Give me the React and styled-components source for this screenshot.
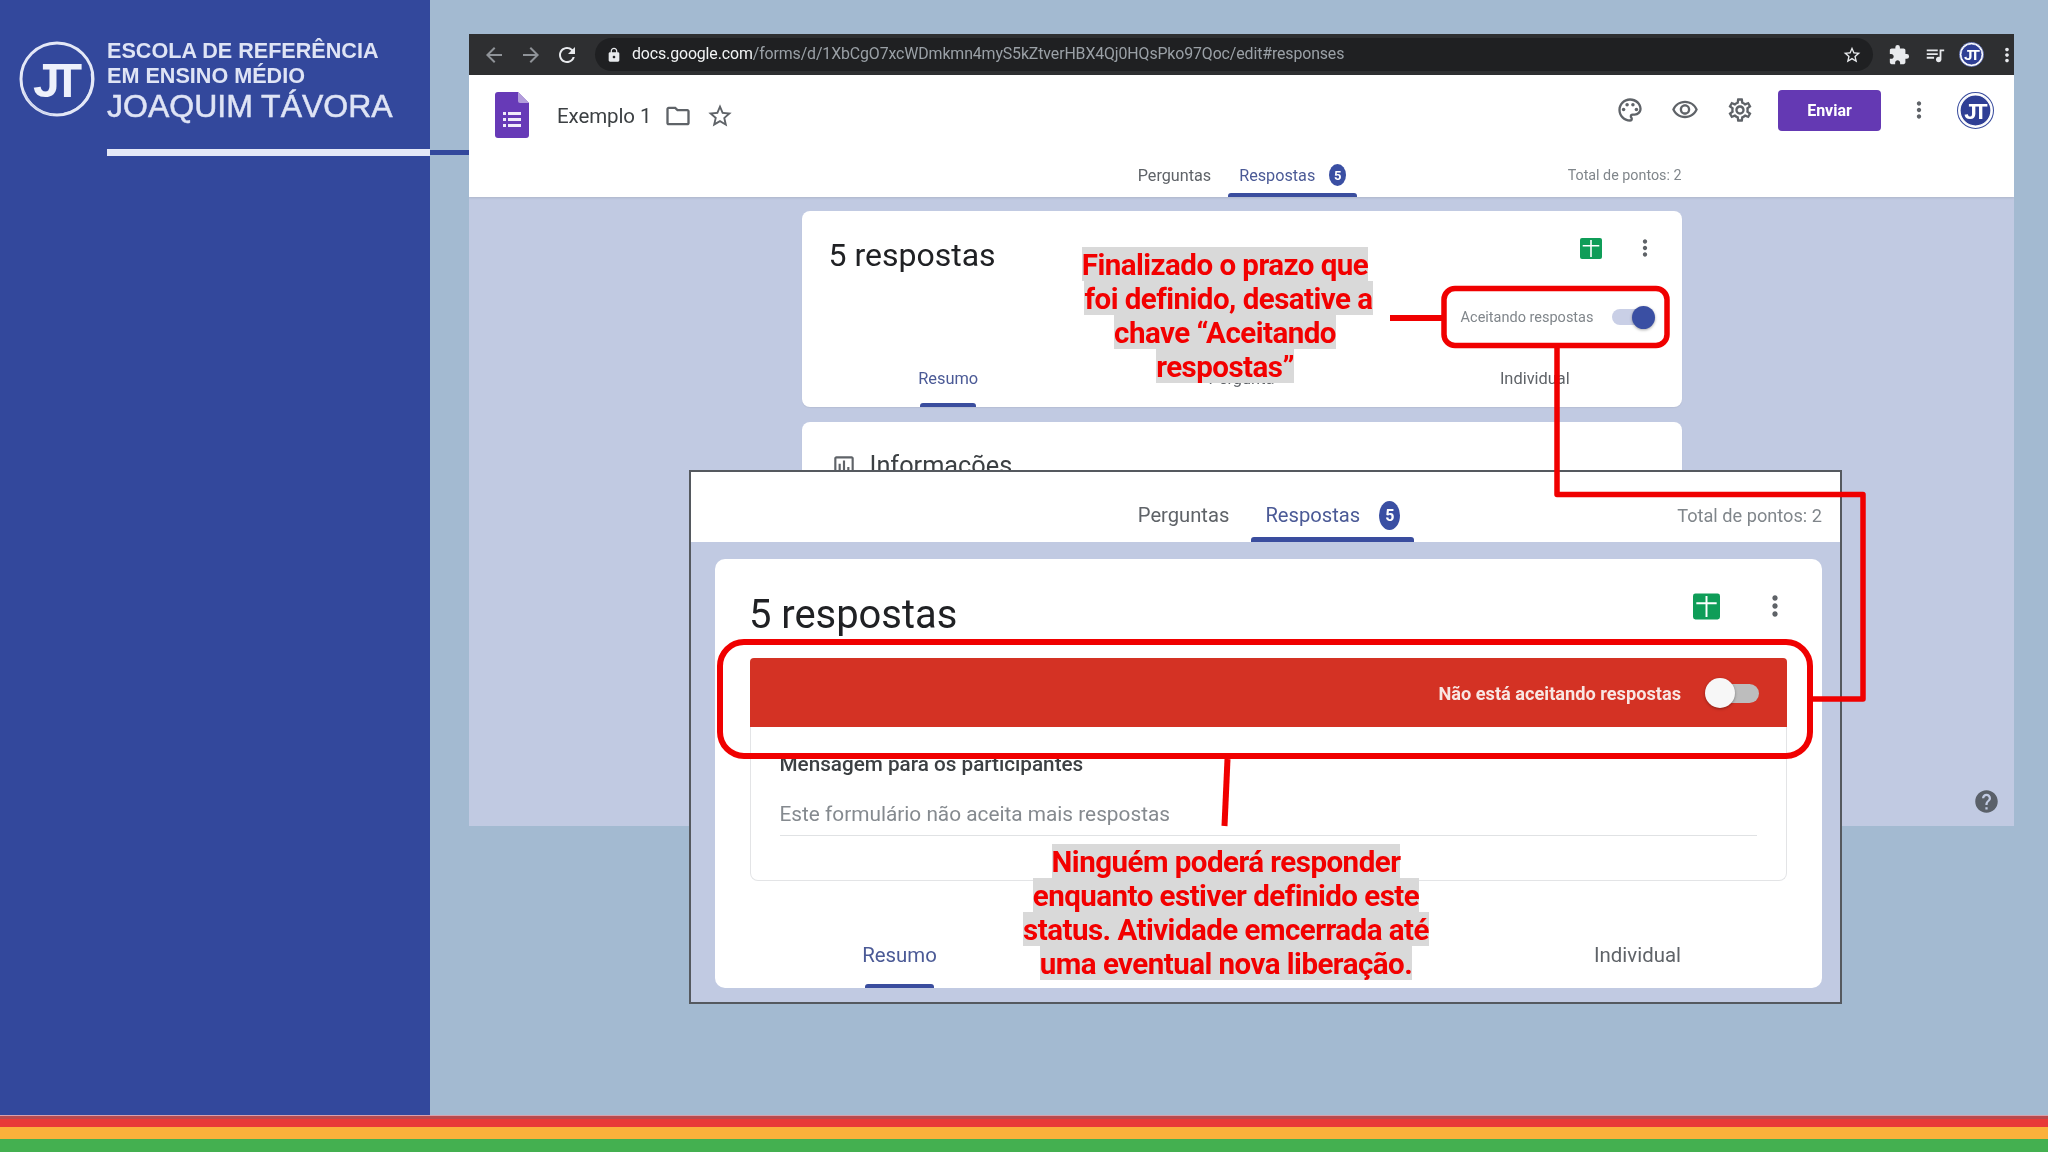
import React from 'react';
import styled, { createGlobalStyle } from 'styled-components';
import {
  MdArrowBack, MdArrowForward, MdRefresh, MdLock, MdStarBorder, MdExtension, MdQueueMusic, MdMoreVert,
  MdOutlineFolder, MdOutlinePalette, MdOutlineVisibility, MdOutlineSettings, MdHelp, MdOutlineAssessment,
} from 'react-icons/md';

const Global = createGlobalStyle`
  html, body { margin: 0; padding: 0; background: #a3bad1; }
  #root { width: 2048px; height: 1152px; overflow: hidden; }
  * { box-sizing: border-box; }
`;

const Slide = styled.div`
  position: relative; width: 2048px; height: 1152px; display: flex; flex-direction: column;
  background: #a3bad1; font-family: Roboto, "Liberation Sans", sans-serif; overflow: hidden;
  filter: blur(0.4px);
`;
const SlideBody = styled.div`flex: 1; display: flex; min-height: 0;`;
const Stripe = styled.div`height: ${p => p.$h}px; background: ${p => p.$c}; flex: none;`;

const Sidebar = styled.aside`
  position: relative; width: 430px; flex: none; background: #33489c; padding: 41px 0 0 19px;
  &::after { content: ''; position: absolute; left: 430px; top: 150px; width: 39px; height: 5px; background: #33489c; }
`;
const Brand = styled.div`display: flex; gap: 12px; align-items: flex-start; color: #dfe4f5; height: 102px;`;
const BrandText = styled.div`display: flex; flex-direction: column; margin-top: -3px; font-family: "Liberation Sans", sans-serif;`;
const BrandLine = styled.div`
  font-size: ${p => p.$big ? 32 : 21.6}px; font-weight: ${p => p.$big ? 400 : 700};
  line-height: ${p => p.$big ? 34 : 25}px; white-space: nowrap; margin-top: ${p => p.$big ? 1 : 0}px;
  -webkit-text-stroke: ${p => p.$big ? '0.5px #dfe4f5' : '0'};
`;
const SidebarRule = styled.div`height: 7px; background: #e4e8f7; margin: 6px 0 0 88px;`;

const Workspace = styled.main`flex: 1; padding: 34px 34px 0 39px; min-width: 0;`;
const Browser = styled.div`height: 792px; display: flex; flex-direction: column; background: #c1cae2; overflow: hidden;`;

const ChromeBar = styled.div`height: 41px; flex: none; display: flex; align-items: center; background: #2e2f31; padding-left: 7px; color: #e8eaed;`;
const ChromeSlot = styled.div`
  width: ${p => p.$w || 36.5}px; flex: none; display: flex; justify-content: center; align-items: center;
  color: ${p => p.$dim ? '#8f9398' : '#e8eaed'}; font-size: ${p => p.$size || 24}px;
`;
const AddressPill = styled.div`
  width: 1278px; height: 33px; margin: 0 8px 0 9.5px; flex: none; border-radius: 17px; background: #1f2022;
  display: flex; align-items: center; padding: 0 11px 0 11px; font-size: 15.9px;
`;
const LockSlot = styled.span`display: flex; font-size: 16px; color: #e8eaed; margin-right: 10px;`;
const Url = styled.div`flex: 1; color: #9aa0a6; white-space: nowrap; letter-spacing: -0.12px; margin-top: -2px;`;
const UrlHost = styled.span`color: #f1f3f4;`;

const AppHeader = styled.header`flex: none; background: #fff; height: 122px; display: flex; flex-direction: column; box-shadow: 0 1px 2px rgba(60,64,67,.15); position: relative;`;
const AppBar = styled.div`height: 75px; flex: none; display: flex; justify-content: space-between; padding: 0 20px 0 26px;`;
const AppLeft = styled.div`display: flex; align-items: center; padding-top: 7px;`;
const FormsMark = styled.span`display: flex; margin-top: -2px;`;
const DocTitle = styled.div`font-size: 20.5px; color: #3c4043; margin: 0 13px 0 28px; letter-spacing: -0.1px;`;
const GreyIcon = styled.span`display: flex; color: #5f6368; font-size: ${p => p.$size || 26}px; margin-left: ${p => p.$ml || 0}px;`;
const AppRight = styled.div`display: flex; align-items: center; padding-bottom: 5px;`;
const ActionSlot = styled.div`width: ${p => p.$w || 55}px; display: flex; justify-content: center; align-items: center; color: #5f6368; font-size: ${p => p.$size || 28}px;`;
const SendButton = styled.div`
  width: 103px; height: 41px; margin-left: 11px; border-radius: 4px; background: #6439b3; color: #fff;
  font-weight: 700; font-size: 16px; display: flex; align-items: center; justify-content: center;
`;

const TabBarRow = styled.div`
  flex: none; width: ${p => p.$w}px; height: ${p => p.$h}px; margin: 0 auto;
  display: grid; grid-template-columns: 1fr auto 1fr; align-items: stretch;
`;
const TabGroup = styled.div`grid-column: 2; display: flex; gap: ${p => p.$gap}px;`;
const Tab = styled.div`
  position: relative; display: flex; align-items: center; gap: ${p => p.$gap || 0}px;
  padding: ${p => p.$pt}px ${p => p.$pr || p.$pl}px 0 ${p => p.$pl}px; font-size: ${p => p.$fs}px; white-space: nowrap;
  color: ${p => p.$active ? '#4b5a96' : '#5f6368'};
  &::after {
    content: ''; display: ${p => p.$active ? 'block' : 'none'}; position: absolute; left: 0; right: 0; bottom: 0;
    height: ${p => p.$bar}px; background: #3a4d9e; border-radius: 3px 3px 0 0;
  }
`;
const Badge = styled.span`
  width: ${p => p.$w}px; height: ${p => p.$h}px; border-radius: 50%; background: #3a4fa3; color: #fff;
  display: flex; align-items: center; justify-content: center; font-size: ${p => p.$fs}px; font-weight: 700;
`;
const TotalPoints = styled.div`justify-self: end; align-self: center; color: #80868b; font-size: ${p => p.$fs}px; white-space: nowrap; padding-top: ${p => p.$pt}px;`;

const ContentArea = styled.div`flex: 1; min-height: 0; display: flex; flex-direction: column; align-items: center; gap: 15px; padding-top: 14px;`;
const Card = styled.section`
  width: 880px; height: ${p => p.$h ? p.$h + 'px' : 'auto'}; flex: ${p => p.$h ? 'none' : '1'}; background: #fff; border-radius: 8px;
  display: flex; flex-direction: column; box-shadow: 0 1px 1px rgba(60,64,67,.08); overflow: hidden;
`;
const CardTop = styled.div`
  height: ${p => p.$h}px; flex: none; display: flex; justify-content: space-between; align-items: flex-start;
  padding: ${p => p.$pt}px ${p => p.$pr}px 0 ${p => p.$pl}px;
`;
const CardTitle = styled.h2`margin: 0; font-weight: 400; color: #202124; font-size: ${p => p.$fs}px; line-height: 1.2; white-space: nowrap;`;
const CardTools = styled.div`display: flex; align-items: center; gap: ${p => p.$gap}px; margin-top: ${p => p.$mt}px;`;
const Dots = styled.span`display: flex; color: #5f6368; font-size: ${p => p.$size}px;`;
const ToggleRow = styled.div`height: 72px; flex: none; display: flex; justify-content: flex-end; align-items: center; gap: 18px; padding-right: 32px; color: #80868b; font-size: 14.5px;`;
const Track = styled.div`
  position: relative; width: ${p => p.$w}px; height: ${p => p.$h}px; border-radius: ${p => p.$h}px; background: ${p => p.$c};
`;
const Thumb = styled.div`
  position: absolute; top: 50%; left: ${p => p.$x}px; width: ${p => p.$d}px; height: ${p => p.$d}px; margin-top: ${p => -p.$d / 2}px;
  border-radius: 50%; background: ${p => p.$c}; box-shadow: 0 1px 3px rgba(0,0,0,.35);
`;
const SectionTabs = styled.div`
  flex: none; height: ${p => p.$h}px; display: grid; grid-template-columns: repeat(3, 1fr); margin-top: auto;
`;
const SectionTab = styled.div`
  position: relative; display: flex; justify-content: center; padding-top: ${p => p.$pt}px;
  font-size: ${p => p.$fs}px; line-height: 1.2; color: ${p => p.$active ? '#4b5a96' : '#5f6368'};
`;
const SectionMark = styled.i`
  position: absolute; bottom: 0; left: 50%; width: ${p => p.$w}px; margin-left: ${p => -p.$w / 2}px; height: ${p => p.$h}px;
  background: #3a4d9e; border-radius: 3px 3px 0 0;
`;
const InfoRow = styled.div`display: flex; align-items: center; gap: 13px; padding: 29px 0 0 29px; color: #3c4043; font-size: 25.3px;`;

const Inset = styled.div`
  position: absolute; left: 689px; top: 470px; width: 1153px; height: 534px; background: #c1cae2;
  border: 2px solid #55595f; display: flex; flex-direction: column;
`;
const InsetHeader = styled.div`height: 70px; flex: none; background: #fff; padding: 0 18px 0 24px;`;
const InsetCard = styled.section`
  height: 429px; margin: 17px 18px 0 24px; background: #fff; border-radius: 10px; display: flex; flex-direction: column; overflow: hidden;
`;
const Banner = styled.div`
  height: 69px; flex: none; margin: 0 35px 0 34.5px; background: #d43224; border-radius: 4px 4px 0 0; display: flex; justify-content: flex-end;
  align-items: center; gap: 39px; padding: 1px 28px 0 0; color: #f8e6e3; font-weight: 700; font-size: 18.2px;
`;
const MessageBox = styled.div`
  height: 154px; flex: none; margin: 0 35px 0 34.5px; padding: 26px 29px 0; border: 1px solid #e3e4e6; border-top: 0; border-radius: 0 0 8px 8px;
`;
const MessageLabel = styled.div`font-size: 20.7px; font-weight: 500; color: #3c4043; line-height: 22px;`;
const MessageField = styled.div`margin-top: 27px; padding-bottom: 9px; font-size: 20.8px; line-height: 24px; color: #858a8f; border-bottom: 1px solid #e0e2e4;`;

const Callout = styled.div`
  position: absolute; left: ${p => p.$x}px; top: ${p => p.$y}px; width: ${p => p.$w}px; display: flex; flex-direction: column; align-items: center;
  color: #f20000; font-weight: 700; font-size: 29.5px; line-height: 36px; letter-spacing: -0.52px;
`;
const CalloutLine = styled.span`
  display: block; white-space: nowrap; background: #d9d9d9; height: 34px; margin-left: ${p => p.$dx || 0}px;
`;
const Annotations = styled.svg`position: absolute; left: 0; top: 0; pointer-events: none;`;
const HelpMark = styled.span`position: absolute; left: 1973px; top: 788px; display: flex; font-size: 27px; color: #5a6069;`;

const Logo = ({ size = 76 }) => (
  <svg width={size} height={size} viewBox="0 0 76 76">
    <circle cx="38" cy="38" r="36" fill="none" stroke="#e4e8f7" strokeWidth="3" />
    <path d="M72 30a35 35 0 0 1-25 42" fill="none" stroke="#e4e8f7" strokeWidth="1.6" transform="rotate(4 38 38)" />
    <path d="M5 50a35 35 0 0 0 29 24" fill="none" stroke="#cfd6ee" strokeWidth="1.6" />
    <text x="35" y="56" textAnchor="middle" fontFamily="Liberation Sans" fontWeight="700" fontSize="48" fill="#eef1fb" letterSpacing="-7">JT</text>
  </svg>
);
const Avatar = ({ size }) => (
  <svg width={size} height={size} viewBox="0 0 36 36">
    <circle cx="18" cy="18" r="17.5" fill="#fff" stroke="#3a4d9e" />
    <circle cx="18" cy="18" r="15" fill="#2f3f95" stroke="#fff" strokeWidth="1" />
    <text x="17" y="26" textAnchor="middle" fontFamily="Liberation Sans" fontWeight="700" fontSize="22" fill="#fff" letterSpacing="-3">JT</text>
  </svg>
);
const FormsIcon = () => (
  <svg width="34" height="46" viewBox="0 0 34 46">
    <path d="M3 0h20l11 11v32a3 3 0 0 1-3 3H3a3 3 0 0 1-3-3V3a3 3 0 0 1 3-3z" fill="#673ab7" />
    <path d="M23 0l11 11H25a2 2 0 0 1-2-2z" fill="#b39ddb" />
    <path d="M8 20h3v3H8zM13 20h13v3H13zM8 26h3v3H8zM13 26h13v3H13zM8 32h3v3H8zM13 32h13v3H13z" fill="#f1ecfa" />
  </svg>
);
const SheetsIcon = ({ w, h }) => (
  <svg width={w} height={h} viewBox="0 0 22 21">
    <rect width="22" height="21" rx="2" fill="#0f9d58" />
    <path d="M10.2 2h1.6v5h7.5v1.6h-7.5V19h-1.6V8.6H2.7V7h7.5z" fill="#fff" />
  </svg>
);

const urlRest = '/forms/d/1XbCgO7xcWDmkmn4myS5kZtverHBX4Qj0HQsPko97Qoc/edit#responses';

export default function App() {
  return (
    <Slide>
      <Global />
      <SlideBody>
        <Sidebar>
          <Brand>
            <Logo />
            <BrandText>
              <BrandLine>ESCOLA DE REFERÊNCIA</BrandLine>
              <BrandLine>EM ENSINO MÉDIO</BrandLine>
              <BrandLine $big>JOAQUIM TÁVORA</BrandLine>
            </BrandText>
          </Brand>
          <SidebarRule />
        </Sidebar>
        <Workspace>
          <Browser>
            <ChromeBar>
              <ChromeSlot $dim><MdArrowBack /></ChromeSlot>
              <ChromeSlot $dim><MdArrowForward /></ChromeSlot>
              <ChromeSlot><MdRefresh /></ChromeSlot>
              <AddressPill>
                <LockSlot><MdLock /></LockSlot>
                <Url><UrlHost>docs.google.com</UrlHost>{urlRest}</Url>
                <ChromeSlot $w={20} $size={22}><MdStarBorder /></ChromeSlot>
              </AddressPill>
              <ChromeSlot $w={36} $size={22}><MdExtension /></ChromeSlot>
              <ChromeSlot $w={36} $size={22}><MdQueueMusic /></ChromeSlot>
              <ChromeSlot $w={36} $size={24}><Avatar size={25} /></ChromeSlot>
              <ChromeSlot $w={36} $size={22}><MdMoreVert /></ChromeSlot>
            </ChromeBar>
            <AppHeader>
              <AppBar>
                <AppLeft>
                  <FormsMark><FormsIcon /></FormsMark>
                  <DocTitle>Exemplo 1</DocTitle>
                  <GreyIcon $size={28}><MdOutlineFolder /></GreyIcon>
                  <GreyIcon $size={28} $ml={14}><MdStarBorder /></GreyIcon>
                </AppLeft>
                <AppRight>
                  <ActionSlot><MdOutlinePalette /></ActionSlot>
                  <ActionSlot><MdOutlineVisibility /></ActionSlot>
                  <ActionSlot><MdOutlineSettings /></ActionSlot>
                  <SendButton>Enviar</SendButton>
                  <ActionSlot $w={76} $size={26}><MdMoreVert /></ActionSlot>
                  <Avatar size={37} />
                </AppRight>
              </AppBar>
              <TabBarRow $w={880} $h={47}>
                <TabGroup $gap={5}>
                  <Tab $pl={12} $pt={3} $fs={16.2} $bar={4}>Perguntas</Tab>
                  <Tab $pl={11} $pr={11} $pt={3} $fs={16.2} $gap={14} $bar={4} $active>Respostas<Badge $w={17} $h={22} $fs={13}>5</Badge></Tab>
                </TabGroup>
                <TotalPoints $fs={14.3} $pt={2}>Total de pontos: 2</TotalPoints>
              </TabBarRow>
            </AppHeader>
            <ContentArea>
              <Card $h={196}>
                <CardTop $h={70} $pt={25} $pr={24} $pl={27}>
                  <CardTitle $fs={32}>5 respostas</CardTitle>
                  <CardTools $gap={30} $mt={-1}>
                    <SheetsIcon w={22} h={21} />
                    <Dots $size={26}><MdMoreVert /></Dots>
                  </CardTools>
                </CardTop>
                <ToggleRow>
                  <span>Aceitando respostas</span>
                  <Track $w={38} $h={16} $c="#c9cfe6"><Thumb $x={20} $d={23} $c="#3a4fa3" /></Track>
                </ToggleRow>
                <SectionTabs $h={54}>
                  <SectionTab $fs={16.4} $pt={16} $active>Resumo<SectionMark $w={56} $h={4} /></SectionTab>
                  <SectionTab $fs={16.4} $pt={16}>Pergunta</SectionTab>
                  <SectionTab $fs={16.4} $pt={16}>Individual</SectionTab>
                </SectionTabs>
              </Card>
              <Card>
                <InfoRow><GreyIcon $size={26}><MdOutlineAssessment /></GreyIcon>Informações</InfoRow>
              </Card>
            </ContentArea>
          </Browser>
        </Workspace>
      </SlideBody>
      <Stripe $h={1} $c="#d9a0ac" />
      <Stripe $h={3} $c="#b94a4e" />
      <Stripe $h={8} $c="#e83a38" />
      <Stripe $h={12} $c="#fbb13b" />
      <Stripe $h={13} $c="#44b050" />

      <HelpMark><MdHelp /></HelpMark>

      <Inset>
        <InsetHeader>
          <TabBarRow $w={1107} $h={70}>
            <TabGroup $gap={7}>
              <Tab $pl={15} $pt={16} $fs={20.2} $bar={5}>Perguntas</Tab>
              <Tab $pl={14} $pr={14} $pt={16} $fs={20.2} $gap={19} $bar={5} $active>Respostas<Badge $w={21} $h={29} $fs={16}>5</Badge></Tab>
            </TabGroup>
            <TotalPoints $fs={18.2} $pt={16}>Total de pontos: 2</TotalPoints>
          </TabBarRow>
        </InsetHeader>
        <InsetCard>
          <CardTop $h={99} $pt={32} $pr={31} $pl={34}>
            <CardTitle $fs={39.9}>5 respostas</CardTitle>
            <CardTools $gap={39} $mt={-1}>
              <SheetsIcon w={27} h={27} />
              <Dots $size={32}><MdMoreVert /></Dots>
            </CardTools>
          </CardTop>
          <Banner>
            <span>Não está aceitando respostas</span>
            <Track $w={39} $h={19} $c="#bdbdbd"><Thumb $x={-15} $d={30} $c="#f7f7f7" /></Track>
          </Banner>
          <MessageBox>
            <MessageLabel>Mensagem para os participantes</MessageLabel>
            <MessageField>Este formulário não aceita mais respostas</MessageField>
          </MessageBox>
          <SectionTabs $h={107}>
            <SectionTab $fs={20.4} $pt={62} $active>Resumo<SectionMark $w={69} $h={4} /></SectionTab>
            <SectionTab $fs={20.4} $pt={62} />
            <SectionTab $fs={20.4} $pt={62}>Individual</SectionTab>
          </SectionTabs>
        </InsetCard>
      </Inset>

      <Annotations width="2048" height="1152" viewBox="0 0 2048 1152" fill="none" stroke="#f00000">
        <rect x="1444" y="288.5" width="223" height="57" rx="11" strokeWidth="5.5" />
        <path d="M1390 318H1444" strokeWidth="6" />
        <path d="M1557 348V494.5H1863V699H1810" strokeWidth="5.5" strokeLinejoin="round" />
        <rect x="720" y="642" width="1090" height="114" rx="24" strokeWidth="6" />
        <path d="M1227.5 759L1224.5 826" strokeWidth="6" />
      </Annotations>

      <Callout $x={1074} $y={247} $w={302}>
        <CalloutLine>Finalizado o prazo que</CalloutLine>
        <CalloutLine $dx={7}>foi definido, desative a</CalloutLine>
        <CalloutLine>chave “Aceitando</CalloutLine>
        <CalloutLine>respostas”</CalloutLine>
      </Callout>
      <Callout $x={1025} $y={844} $w={402}>
        <CalloutLine>Ninguém poderá responder</CalloutLine>
        <CalloutLine>enquanto estiver definido este</CalloutLine>
        <CalloutLine>status. Atividade emcerrada até</CalloutLine>
        <CalloutLine>uma eventual nova liberação.</CalloutLine>
      </Callout>
    </Slide>
  );
}
